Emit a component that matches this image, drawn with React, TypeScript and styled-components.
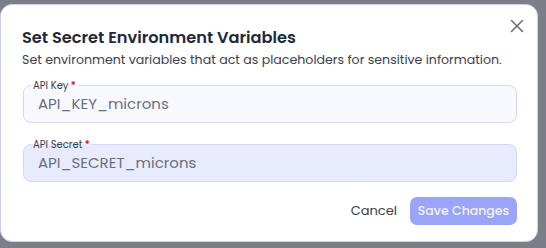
import React from "react";
import styled, { createGlobalStyle } from "styled-components";

const Global = createGlobalStyle`
  html, body { margin: 0; padding: 0; }
  body { background: #7d7f88; font-family: "Poppins", "Open Sans", "Noto Sans", sans-serif; }
  * { box-sizing: border-box; }
`;

const Backdrop = styled.div`
  width: 546px;
  height: 248px;
  background: #7d7f88;
  padding: 4px 8px 6px 0;
  display: flex;
`;

const Dialog = styled.div`
  position: relative;
  flex: 1;
  background: #ffffff;
  border: 1px solid #c9cff7;
  border-radius: 12px;
  padding: 22px 20px 0 21px;
  display: flex;
  flex-direction: column;
`;

const Close = styled.button`
  position: absolute;
  top: 9px;
  right: 8px;
  width: 24px;
  height: 24px;
  border: none;
  background: none;
  padding: 0;
  display: flex;
  align-items: center;
  justify-content: center;
  cursor: pointer;
`;

const Title = styled.h2`
  margin: 0;
  font-size: 16.2px;
  font-weight: 600;
  color: #22273a;
  line-height: 22px;
`;

const Subtitle = styled.p`
  margin: 2px 0 0;
  font-size: 12.6px;
  color: #3a3e4c;
  line-height: 18px;
  white-space: nowrap;
`;

const Fields = styled.div`
  display: flex;
  flex-direction: column;
  gap: 21px;
  margin-top: 16px;
  padding-left: 1px;
`;

const Field = styled.div<{ $filled?: boolean }>`
  position: relative;
  height: 38px;
  padding: 0 14px;
  border: 1px solid #d3d7fa;
  border-radius: 8px;
  background: ${(p) => (p.$filled ? "#e8ebfe" : "#f8f9ff")};
  display: flex;
  align-items: center;
`;

const Label = styled.label<{ $filled?: boolean }>`
  position: absolute;
  top: -6px;
  left: 7px;
  padding: 0 2px;
  font-size: 10px;
  line-height: 11px;
  color: #3a3e4c;
  background: linear-gradient(#ffffff 50%, ${(p) => (p.$filled ? "#e8ebfe" : "#f8f9ff")} 50%);
`;

const Star = styled.span`
  color: #e0203a;
  margin-left: 2px;
  font-weight: 700;
`;

const Value = styled.div`
  font-size: 15px;
  color: #6c6f7a;
  line-height: 20px;
`;

const Footer = styled.div`
  display: flex;
  justify-content: flex-end;
  align-items: center;
  gap: 13px;
  margin-top: 15px;
`;

const Cancel = styled.button`
  border: none;
  background: none;
  font: inherit;
  font-size: 13px;
  color: #3a3e4c;
  padding: 0;
`;

const Save = styled.button`
  border: none;
  background: #9aa5f7;
  color: #f0f2ff;
  font: inherit;
  font-size: 12.5px;
  font-weight: 500;
  height: 28px;
  width: 107px;
  padding: 0;
  border-radius: 7px;
`;

export default function App() {
  return (
    <>
      <Global />
      <Backdrop>
        <Dialog>
          <Close aria-label="Close">
            <svg width="14" height="14" viewBox="0 0 14 14" fill="none" stroke="#6c6f7a" strokeWidth="1.6" strokeLinecap="round">
              <path d="M1.5 1.5L12.5 12.5M12.5 1.5L1.5 12.5" />
            </svg>
          </Close>
          <Title>Set Secret Environment Variables</Title>
          <Subtitle>Set environment variables that act as placeholders for sensitive information.</Subtitle>
          <Fields>
            <Field>
              <Label>API Key<Star>*</Star></Label>
              <Value>API_KEY_microns</Value>
            </Field>
            <Field $filled>
              <Label $filled>API Secret<Star>*</Star></Label>
              <Value>API_SECRET_microns</Value>
            </Field>
          </Fields>
          <Footer>
            <Cancel>Cancel</Cancel>
            <Save>Save Changes</Save>
          </Footer>
        </Dialog>
      </Backdrop>
    </>
  );
}
